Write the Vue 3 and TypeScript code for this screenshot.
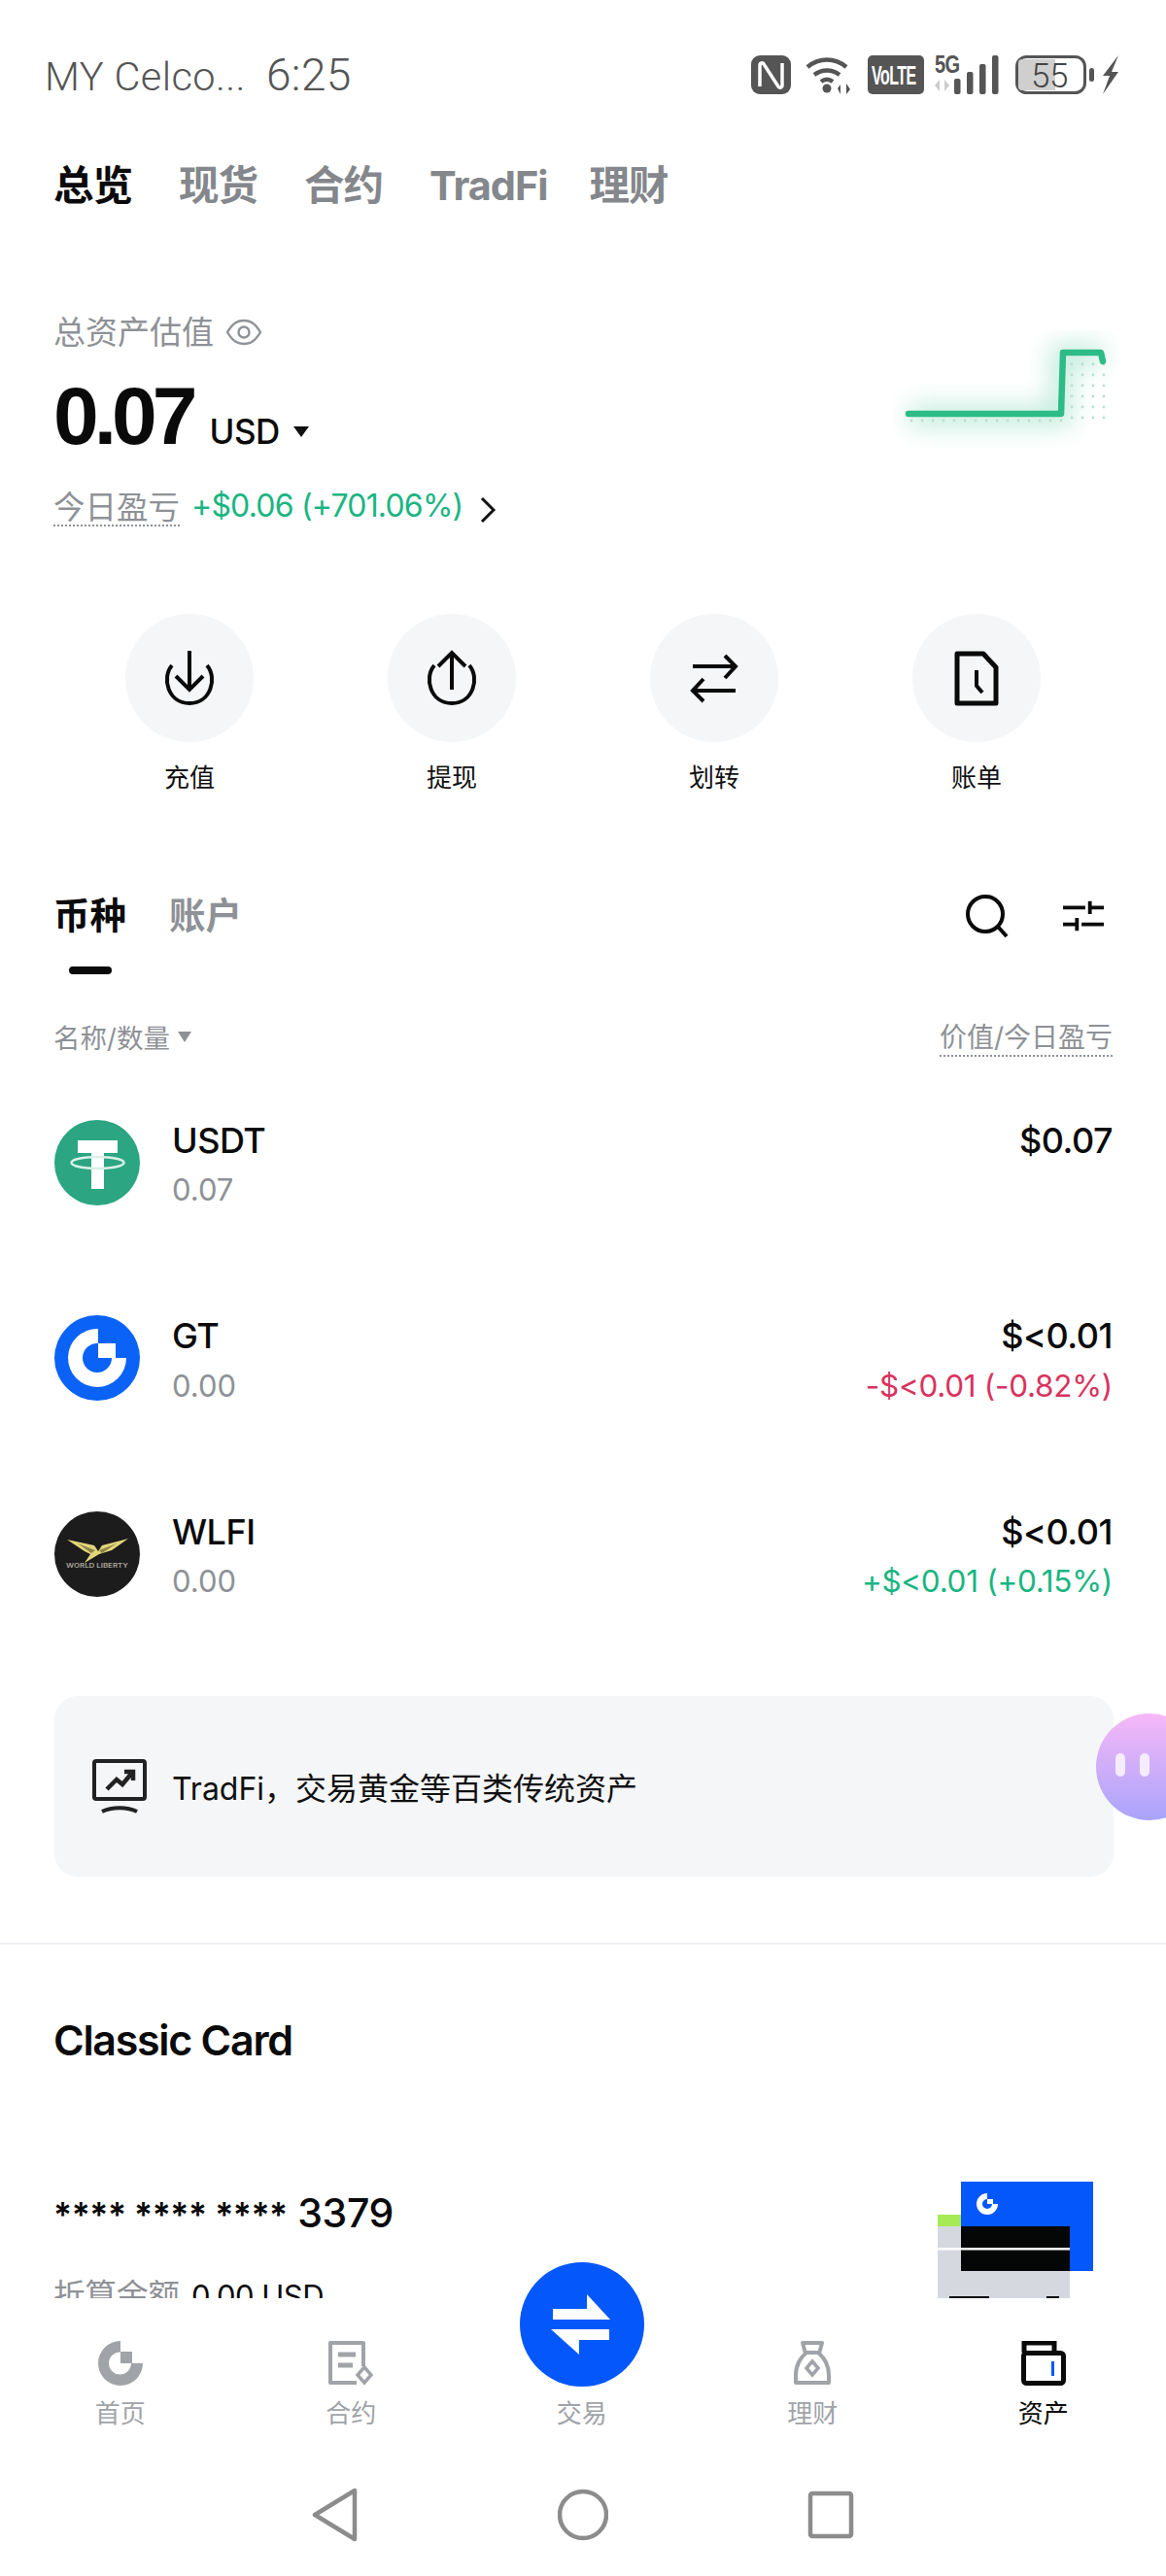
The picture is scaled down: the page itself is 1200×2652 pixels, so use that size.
<script setup lang="ts">
const topTabs = ['总览', '现货', '合约', 'TradFi', '理财']

const actions = [
  { label: '充值', icon: 'down' },
  { label: '提现', icon: 'up' },
  { label: '划转', icon: 'swap' },
  { label: '账单', icon: 'bill' },
]

const coins = [
  { logo: 'usdt', name: 'USDT', qty: '0.07', value: '$0.07', pnl: '', tone: '' },
  { logo: 'gt', name: 'GT', qty: '0.00', value: '$<0.01', pnl: '-$<0.01 (-0.82%)', tone: 'down' },
  { logo: 'wlfi', name: 'WLFI', qty: '0.00', value: '$<0.01', pnl: '+$<0.01 (+0.15%)', tone: 'up' },
]

const navItems = [
  { label: '首页', icon: 'home' },
  { label: '合约', icon: 'futures' },
  { label: '交易', icon: 'trade' },
  { label: '理财', icon: 'earn' },
  { label: '资产', icon: 'assets' },
]

// dot grid under the sparkline
const dots: { x: number; y: number }[] = []
for (let i = 0; i < 6; i++) {
  for (let j = 0; j < 4; j++) dots.push({ x: 183 + j * 11, y: 35 + i * 11 })
}
for (let k = 0; k < 15; k++) dots.push({ x: 18 + k * 11, y: 93 })
</script>

<template>
  <div class="page">
    <div class="main">
      <div class="status">
        <div class="carrier">
          <span>MY Celco...</span>
          <span class="clock">6:25</span>
        </div>
        <svg class="status-icons" width="380" height="58" viewBox="0 -8 380 58">
          <rect x="0" y="1" width="41" height="40" rx="9" fill="#555" />
          <path d="M9 33V11c0-2 3-3 4-1l15 23c1 2 4 1 4-1V9" fill="none" stroke="#fff" stroke-width="3.500" />
          <path d="M58 13c12-10 28-10 40 0M65 21c8-6 18-6 26 0M72 28c4-3 8-3 12 0" fill="none" stroke="#555" stroke-width="4.500" />
          <circle cx="78" cy="35" r="4.500" fill="#555" />
          <path d="M92 41v-10l-3 4zM98 30v11l4-5z" fill="#555" />
          <rect x="120" y="1" width="58" height="40" rx="5" fill="#555" />
          <text class="volte" transform="translate(124 31) scale(1 1.700)">VoLTE</text>
          <text class="five-g" transform="translate(189 19) scale(1 1.250)">5G</text>
          <path d="M194 38V26l-5 6zM199 26v12l5-6z" fill="#ccc" />
          <rect x="209" y="25" width="6.500" height="16" rx="2" fill="#555" />
          <rect x="222" y="18" width="6.500" height="23" rx="2" fill="#555" />
          <rect x="235" y="10" width="6.500" height="31" rx="2" fill="#555" />
          <rect x="248" y="1" width="6.500" height="40" rx="2" fill="#555" />
          <rect x="273.500" y="2.500" width="70" height="37" rx="10" fill="#fff" stroke="#555" stroke-width="3" />
          <path d="M279 5h34v32h-34q-4 0-4-4V9q0-4 4-4z" fill="#cfcfcf" />
          <text x="307" y="34" class="battery" text-anchor="middle">55</text>
          <rect x="348" y="14" width="5" height="14" rx="2.500" fill="#555" />
          <path d="M378 1l-16 21h7l-7 19 16-23h-7z" fill="#555" />
        </svg>
      </div>

      <div class="top-tabs">
        <span v-for="(t, i) in topTabs" :key="t" class="top-tab" :class="{ active: i === 0 }">{{ t }}</span>
      </div>

      <div class="overview">
        <div class="overview-left">
          <div class="total-label">
            总资产估值
            <svg width="38" height="30" viewBox="0 0 38 30" fill="none" stroke="#8e9196" stroke-width="2.400">
              <path d="M2 15C8 5 13 3 19 3s11 2 17 12c-6 10-11 12-17 12S8 25 2 15z" />
              <circle cx="19" cy="15" r="5.500" />
            </svg>
          </div>
          <div class="amount-row">
            <span class="amount">0.07</span>
            <span class="currency">USD</span>
            <span class="caret"></span>
          </div>
          <div class="pnl-row">
            <span class="pnl-label">今日盈亏</span>
            <span class="pnl-value">+$0.06 (+701.06%)</span>
            <svg width="20" height="28" viewBox="0 0 20 28" fill="none" stroke="#111" stroke-width="3">
              <path d="M4 2l12 12L4 26" />
            </svg>
          </div>
        </div>
        <svg class="spark" width="230" height="125" viewBox="0 0 230 125">
          <defs>
            <filter id="glow" x="-30%" y="-60%" width="160%" height="220%">
              <feGaussianBlur stdDeviation="13" />
            </filter>
          </defs>
          <path d="M15 88H172V25H215" fill="none" stroke="#2dbb87" stroke-width="20" opacity="0.32" filter="url(#glow)" />
          <circle v-for="(d, i) in dots" :key="i" :cx="d.x" :cy="d.y" r="1.400" fill="#b9dfd0" />
          <path d="M15 86H172L174 23H213L215 32" fill="none" stroke="#2dbb87" stroke-width="6.500" stroke-linecap="round" stroke-linejoin="round" />
        </svg>
      </div>

      <div class="actions">
        <div v-for="a in actions" :key="a.label" class="action">
          <div class="action-circle">
            <svg width="60" height="60" viewBox="0 0 60 60" fill="none" stroke="#0a0a0a" stroke-width="4">
              <template v-if="a.icon === 'down'">
                <path d="M12 17C1 30 8 56 30 56s29-26 18-39" />
                <path d="M30 2v38M16 28l14 14 14-14" />
              </template>
              <template v-else-if="a.icon === 'up'">
                <path d="M12 17C1 30 8 56 30 56s29-26 18-39" />
                <path d="M30 42V4M16 18L30 4l14 14" />
              </template>
              <template v-else-if="a.icon === 'swap'">
                <path d="M8 18h44M41 7l11 11-11 12" />
                <path d="M52 43H8M19 31L8 43l11 11" />
              </template>
              <template v-else>
                <path d="M10 5h27l13 14v37H10z" stroke-linejoin="round" stroke-width="5" />
                <path d="M30 22v16l6 7" />
              </template>
            </svg>
          </div>
          <span class="action-label">{{ a.label }}</span>
        </div>
      </div>

      <div class="asset-tabs">
        <div class="asset-tab-list">
          <div class="asset-tab active">
            币种
            <i class="tab-mark"></i>
          </div>
          <div class="asset-tab">账户</div>
        </div>
        <div class="asset-tools">
          <svg width="46" height="46" viewBox="0 0 46 46" fill="none" stroke="#0a0a0a" stroke-width="4">
            <circle cx="21" cy="21" r="18" />
            <path d="M34 34l9 10" />
          </svg>
          <svg width="42" height="36" viewBox="0 0 44 36" fill="none" stroke="#0a0a0a" stroke-width="4">
            <path d="M0 9h24M31 9h13M29 2v14M0 27h13M20 27h24M15 20v14" />
          </svg>
        </div>
      </div>

      <div class="table-head">
        <span class="head-left">名称/数量<i class="head-caret"></i></span>
        <span class="head-right">价值/今日盈亏</span>
      </div>

      <div class="coins">
        <div v-for="c in coins" :key="c.name" class="coin">
          <svg class="coin-logo" width="88" height="88" viewBox="0 0 88 88">
            <template v-if="c.logo === 'usdt'">
              <circle cx="44" cy="44" r="44" fill="#2ba582" />
              <path d="M24 21h41v13H51v37H38V34H24z" fill="#fff" />
              <ellipse cx="44.500" cy="44" rx="27" ry="6" fill="none" stroke="#d9f0e8" stroke-width="2.500" />
            </template>
            <template v-else-if="c.logo === 'gt'">
              <circle cx="44" cy="44" r="44" fill="#0b62f6" />
              <path d="M45 14A30 30 0 1 0 74 44H59A15 15 0 1 1 45 29Z" fill="#fff" />
              <rect x="45" y="29" width="18" height="15" fill="#fff" />
            </template>
            <template v-else>
              <circle cx="44" cy="44" r="44" fill="#1c1c1c" />
              <path d="M13 29l28 6 4 6 4-6 27-7-17 12-13 4-15 9 6-9-6-3z" fill="#e2d67a" />
              <path d="M24 33l18 7-4 3zM64 33l-18 7 3 3z" fill="#8e8545" />
              <text x="44" y="58" class="wlfi-text" text-anchor="middle" textLength="64" lengthAdjust="spacingAndGlyphs">WORLD LIBERTY</text>
            </template>
          </svg>
          <div class="coin-info">
            <span class="coin-name">{{ c.name }}</span>
            <span class="coin-qty">{{ c.qty }}</span>
          </div>
          <div class="coin-values">
            <span class="coin-value">{{ c.value }}</span>
            <span class="coin-pnl" :class="c.tone">{{ c.pnl }}</span>
          </div>
        </div>
      </div>

      <div class="banner">
        <svg width="56" height="56" viewBox="0 0 56 56" fill="none">
          <rect x="2" y="2" width="52" height="39" rx="2" stroke="#222" stroke-width="4" />
          <path d="M15 31l10-10 6 5 10-12M33 13h9v9" stroke="#222" stroke-width="4.500" />
          <path d="M10 54c10-5 26-5 36 0" stroke="#222" stroke-width="4" />
        </svg>
        <span>TradFi，交易黄金等百类传统资产</span>
      </div>

      <div class="divider"></div>

      <div class="card-title">Classic Card</div>
      <div class="card-row">
        <div class="card-info">
          <div class="card-number"><span class="stars">**** **** ****</span> 3379</div>
          <div class="card-balance">
            <span class="balance-label">折算余额</span>
            <span class="balance-value">0.00 USD</span>
          </div>
        </div>
        <svg class="card-art" width="160" height="120" viewBox="0 0 160 120">
          <rect x="24" y="0" width="136" height="92" fill="#0457fb" />
          <rect x="0" y="34" width="24" height="12" fill="#a6ea55" />
          <rect x="0" y="46" width="136" height="74" fill="#d5d9df" />
          <rect x="24" y="46" width="112" height="46" fill="#050606" />
          <rect x="0" y="68" width="136" height="2.500" fill="#fff" />
          <rect x="12" y="118" width="41" height="2" fill="#050606" />
          <rect x="112" y="118" width="13" height="2" fill="#050606" />
          <path d="M51 12A11 11 0 1 0 62 23H56A5 5 0 1 1 51 18Z" fill="#fff" />
          <rect x="51" y="18" width="6" height="5" fill="#fff" />
        </svg>
      </div>
    </div>

    <div class="bubble">
      <i></i>
      <i></i>
    </div>

    <div class="bottom">
      <div class="fab">
        <svg width="66" height="66" viewBox="0 0 66 66" fill="#fff">
          <path d="M38 2l24 26H3V17h35z" />
          <path d="M30 64L1 38h60v11H30z" />
        </svg>
      </div>
      <div class="nav">
        <div v-for="n in navItems" :key="n.label" class="nav-item" :class="{ active: n.icon === 'assets' }">
          <svg class="nav-icon" width="46" height="46" viewBox="0 0 46 46" fill="none">
            <template v-if="n.icon === 'home'">
              <path d="M23 0A23 23 0 1 0 46 23H34A11.500 11.500 0 1 1 23 11.500Z" fill="#a0a3a8" />
              <rect x="23" y="11" width="12" height="12" fill="#a0a3a8" />
            </template>
            <template v-else-if="n.icon === 'futures'">
              <path d="M36 26V2H2v41h27" stroke="#a0a3a8" stroke-width="4" stroke-linejoin="round" />
              <path d="M10 14h18M10 25h15" stroke="#a0a3a8" stroke-width="5" />
              <path d="M37 27l7 8-7 8-7-8z" stroke="#a0a3a8" stroke-width="3.500" />
            </template>
            <template v-else-if="n.icon === 'earn'">
              <path d="M13 2h20l-3 11c5 4 10 12 10 22v8H6v-8c0-10 5-18 10-22z" stroke="#a0a3a8" stroke-width="4" stroke-linejoin="round" />
              <path d="M15 12h16" stroke="#a0a3a8" stroke-width="4" />
              <path d="M23 21l6 7-6 7-6-7z" stroke="#a0a3a8" stroke-width="3.500" />
            </template>
            <template v-else-if="n.icon === 'assets'">
              <path d="M3 12V2h31v10" stroke="#0a0a0a" stroke-width="5" />
              <rect x="2.500" y="12.500" width="41" height="31" rx="3" stroke="#0a0a0a" stroke-width="5" />
              <rect x="31" y="21" width="3" height="15" fill="#0457fb" />
            </template>
          </svg>
          <span>{{ n.label }}</span>
        </div>
      </div>
      <div class="system-nav">
        <svg width="52" height="56" viewBox="0 0 52 56" fill="none" stroke="#8c8c8c" stroke-width="4.500" stroke-linejoin="round">
          <path d="M46 3v50L5 28z" />
        </svg>
        <svg width="52" height="56" viewBox="0 0 52 56" fill="none" stroke="#8c8c8c" stroke-width="4.500">
          <circle cx="26" cy="28" r="24" />
        </svg>
        <svg width="52" height="56" viewBox="0 0 52 56" fill="none" stroke="#8c8c8c" stroke-width="4.500" stroke-linejoin="round">
          <rect x="5" y="6" width="42" height="44" rx="2" />
        </svg>
      </div>
    </div>
  </div>
</template>

<style>
html, body { margin: 0; background: #fff; }
</style>

<style scoped>
.page {
  position: relative;
  width: 1200px;
  height: 2652px;
  overflow: hidden;
  background: #fff;
  color: #0a0a0a;
  font-family: Inter, "Noto Sans CJK SC", sans-serif;
  letter-spacing: -0.5px;
}
.main { height: 2366px; overflow: hidden; }

.status {
  display: flex;
  justify-content: space-between;
  align-items: center;
  height: 152px;
  padding: 2px 48px 0 46px;
  box-sizing: border-box;
}
.carrier {
  display: flex;
  align-items: baseline;
  gap: 21px;
  font: 300 41.500px/1 Roboto, sans-serif;
  color: #555;
  letter-spacing: 0.4px;
}
.clock { font-size: 46px; }
.status-icons { margin-right: -1px; }
.volte { font: 700 16px "Liberation Sans", sans-serif; fill: #fff; }
.five-g { font: 700 20px "Liberation Sans", sans-serif; fill: #555; }
.battery { font: 300 35px Roboto, sans-serif; fill: #444; }

.top-tabs { display: flex; gap: 48px; padding: 0 55px; height: 78px; align-items: center; }
.top-tab { font-size: 41.500px; font-weight: 700; line-height: 78px; color: #84878b; letter-spacing: -1px; }
.top-tab.active { color: #0a0a0a; }
.top-tab:last-child { margin-left: -5px; }

.overview {
  display: flex;
  justify-content: space-between;
  align-items: flex-start;
  padding: 90px 50px 0 55px;
}
.overview-left { display: flex; flex-direction: column; }
.total-label {
  display: flex;
  align-items: center;
  gap: 12px;
  font-size: 33px;
  line-height: 44px;
  color: #8e9196;
  letter-spacing: 0;
}
.amount-row { display: flex; align-items: baseline; margin-top: 19px; height: 90px; }
.amount {
  font-family: "Liberation Sans", sans-serif;
  font-size: 84px;
  font-weight: 700;
  line-height: 90px;
  letter-spacing: -5px;
}
.currency { font-size: 35px; margin-left: 17px; font-weight: 500; }
.caret {
  margin-left: 14px;
  border-top: 11px solid #111;
  border-left: 8px solid transparent;
  border-right: 8px solid transparent;
  align-self: center;
  margin-top: 33px;
}
.pnl-row { display: flex; align-items: center; margin-top: 30px; height: 44px; }
.pnl-label {
  font-size: 32.500px;
  line-height: 34px;
  color: #8e9196;
  letter-spacing: 0;
  border-bottom: 2px dotted #8e9196;
  margin-bottom: 2px;
}
.pnl-value {
  margin: 0 0 8px 12px;
  font-size: 32px;
  line-height: 36px;
  color: #1ab582;
  letter-spacing: -0.8px;
}
.pnl-row svg { margin-left: 16px; }
.spark { margin-top: 20px; }

.actions {
  display: grid;
  grid-template-columns: repeat(4, 270px);
  padding: 85px 60px 0;
}
.action { display: flex; flex-direction: column; align-items: center; gap: 19px; }
.action-circle {
  width: 132px;
  height: 132px;
  border-radius: 50%;
  background: #f5f6f7;
  display: flex;
  align-items: center;
  justify-content: center;
}
.action-label { font-size: 26px; line-height: 36px; color: #111; letter-spacing: 0; }

.asset-tabs {
  display: flex;
  justify-content: space-between;
  align-items: flex-start;
  padding: 99px 64px 0 55px;
}
.asset-tab-list { display: flex; gap: 44px; }
.asset-tab { font-size: 37.500px; line-height: 50px; font-weight: 700; color: #8e9196; letter-spacing: 0; }
.asset-tab.active { color: #0a0a0a; }
.tab-mark { display: block; width: 44px; height: 8px; margin: 27px 0 0 16px; border-radius: 4px; background: #0a0a0a; }
.asset-tools { display: flex; align-items: center; gap: 55px; margin-top: 2px; }

.table-head {
  display: flex;
  justify-content: space-between;
  align-items: center;
  margin-top: 44px;
  padding: 0 55px;
  height: 40px;
  font-size: 27.500px;
  color: #8e9196;
  letter-spacing: 0;
}
.head-left { display: flex; align-items: center; }
.head-caret {
  margin-left: 8px;
  border-top: 11px solid #8e9196;
  border-left: 7px solid transparent;
  border-right: 7px solid transparent;
}
.head-right { border-bottom: 2px dotted #8e9196; line-height: 36px; font-size: 28px; margin-top: 4px; }

.coins { margin-top: 9px; }
.coin {
  display: flex;
  align-items: center;
  height: 201.500px;
  padding: 0 55px 0 56px;
}
.coin-logo { flex: none; }
.coin-info, .coin-values { display: flex; flex-direction: column; padding-top: 5.500px; }
.coin-info { margin-left: 33px; }
.coin-name, .coin-value { font-size: 36px; line-height: 50px; font-weight: 500; }
.coin-qty { font-size: 31px; line-height: 50px; margin-top: 1.500px; color: #8e9196; letter-spacing: 0; }
.coin-values { align-items: flex-end; margin-left: auto; }
.coin-pnl { min-height: 50px; margin-top: 1.500px; font-size: 31.500px; line-height: 50px; letter-spacing: -0.3px; }
.coin-pnl.up { color: #1ab582; }
.coin-pnl.down { color: #d9325e; }
.wlfi-text { font: 600 6px Inter, sans-serif; fill: #a9a69a; letter-spacing: 0; }

.banner {
  display: flex;
  align-items: center;
  gap: 26px;
  margin: 45.500px 54px 0 56px;
  height: 186px;
  padding-left: 39px;
  border-radius: 24px;
  background: #f5f6f7;
  font-size: 32px;
  color: #111;
  letter-spacing: 0;
}

.divider { height: 2px; margin-top: 68px; background: #eef0f2; }

.card-title { margin: 68px 0 0 55px; font-size: 43px; line-height: 60px; font-weight: 600; letter-spacing: -1.3px; }
.card-row {
  display: flex;
  justify-content: space-between;
  align-items: flex-start;
  margin-top: 116px;
  padding: 0 75px 0 55px;
}
.card-number { padding-top: 3px; font-size: 41px; line-height: 58px; font-weight: 500; letter-spacing: -0.4px; }
.stars { font-size: 35.300px; font-weight: 600; }
.card-balance { display: flex; align-items: center; gap: 12px; margin-top: 32px; line-height: 44px; }
.balance-label { font-size: 32.500px; color: #8e9196; letter-spacing: 0; }
.balance-value { font-size: 31px; }
.card-art { flex: none; }

.bubble {
  position: absolute;
  left: 1128px;
  top: 1764px;
  width: 110px;
  height: 110px;
  border-radius: 50%;
  background: linear-gradient(180deg, #f6b8f8, #a9a4fb);
  display: flex;
  gap: 15px;
  padding: 41px 0 0 20px;
  box-sizing: border-box;
}
.bubble i { width: 10px; height: 24px; border-radius: 5px; background: #f4ecff; }

.bottom { position: relative; height: 286px; background: #fff; }
.fab {
  position: absolute;
  left: 535px;
  top: -37px;
  width: 128px;
  height: 128px;
  border-radius: 50%;
  background: #0457fb;
  display: flex;
  align-items: center;
  justify-content: center;
}
.nav {
  display: grid;
  grid-template-columns: repeat(5, 237.500px);
  padding: 44px 5px 0;
}
.nav-item {
  display: flex;
  flex-direction: column;
  align-items: center;
  gap: 11px;
  font-size: 26px;
  line-height: 36px;
  color: #a0a3a8;
  letter-spacing: 0;
}
.nav-item.active { color: #0a0a0a; }
.system-nav {
  display: flex;
  justify-content: center;
  gap: 203px;
  margin-top: 58px;
}
</style>
